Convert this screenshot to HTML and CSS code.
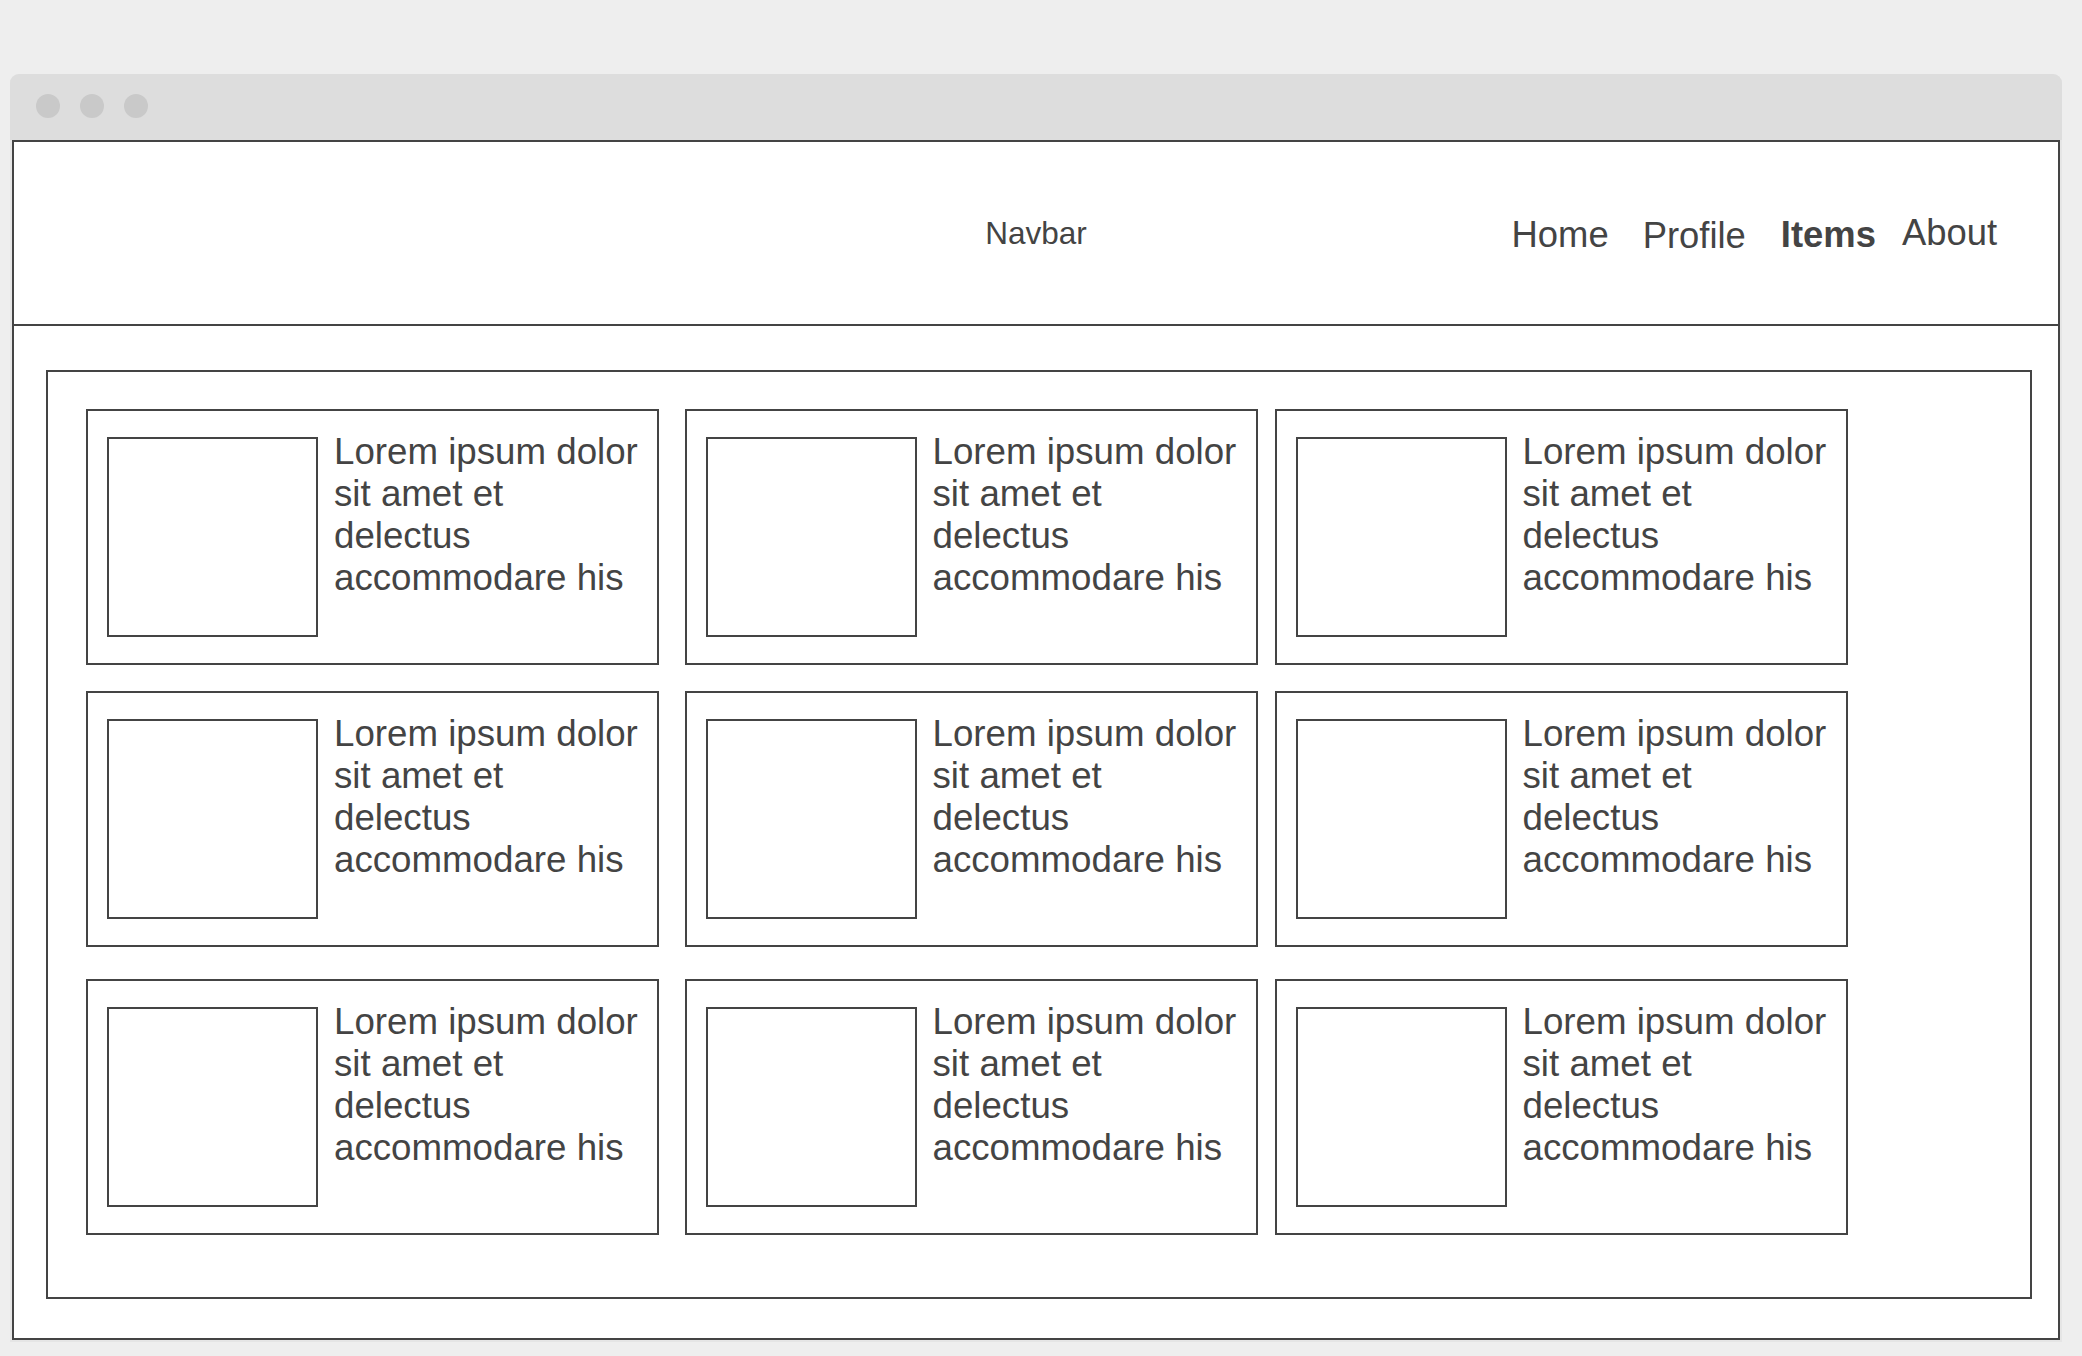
FILE: index.html
```html
<!DOCTYPE html>
<html lang="en">
<head>
<meta charset="utf-8">
<title>Items</title>
<link rel="stylesheet" href="styles.css">
</head>
<body>
<div class="window">
  <div class="titlebar">
    <span class="dot"></span>
    <span class="dot"></span>
    <span class="dot"></span>
  </div>
  <div class="panel">
    <header class="navbar">
      <div class="spacer"></div>
      <div class="brand">Navbar</div>
      <nav class="nav-links">
        <a class="nav-link">Home</a>
        <a class="nav-link nav-profile">Profile</a>
        <a class="nav-link nav-active">Items</a>
        <a class="nav-link nav-about">About</a>
      </nav>
    </header>
    <main class="content">
      <section class="board">
        <div class="grid">
          <div class="card"><div class="thumb"></div><p class="card-text">Lorem ipsum dolor sit amet et delectus accommodare his</p></div>
          <div class="card"><div class="thumb"></div><p class="card-text">Lorem ipsum dolor sit amet et delectus accommodare his</p></div>
          <div class="card"><div class="thumb"></div><p class="card-text">Lorem ipsum dolor sit amet et delectus accommodare his</p></div>
          <div class="card"><div class="thumb"></div><p class="card-text">Lorem ipsum dolor sit amet et delectus accommodare his</p></div>
          <div class="card"><div class="thumb"></div><p class="card-text">Lorem ipsum dolor sit amet et delectus accommodare his</p></div>
          <div class="card"><div class="thumb"></div><p class="card-text">Lorem ipsum dolor sit amet et delectus accommodare his</p></div>
          <div class="card"><div class="thumb"></div><p class="card-text">Lorem ipsum dolor sit amet et delectus accommodare his</p></div>
          <div class="card"><div class="thumb"></div><p class="card-text">Lorem ipsum dolor sit amet et delectus accommodare his</p></div>
          <div class="card"><div class="thumb"></div><p class="card-text">Lorem ipsum dolor sit amet et delectus accommodare his</p></div>
        </div>
      </section>
    </main>
  </div>
</div>
</body>
</html>
```

FILE: styles.css
```css
* {
  box-sizing: border-box;
}

html, body {
  margin: 0;
  padding: 0;
}

body {
  background: #eeeeee;
  font-family: "Liberation Sans", Arial, sans-serif;
  color: #444444;
  width: 2082px;
  height: 1356px;
  overflow: hidden;
}

.window {
  margin: 74px 0 0 10px;
  width: 2052px;
  background: #e5e5e5;
  border-radius: 9px 9px 0 0;
  padding: 0 2px 2px 2px;
}

.titlebar {
  height: 66px;
  background: #dddddd;
  border-radius: 9px 9px 0 0;
  margin: 0 -2px;
  display: flex;
  align-items: flex-start;
  gap: 20px;
  padding: 20px 0 0 26px;
}

.dot {
  width: 24px;
  height: 24px;
  border-radius: 50%;
  background: #c9c9c9;
}

.panel {
  background: #ffffff;
  border: 2px solid #444444;
  height: 1200px;
  display: flex;
  flex-direction: column;
}

.navbar {
  height: 184px;
  border-bottom: 2px solid #444444;
  display: grid;
  grid-template-columns: 1fr auto 1fr;
  align-items: center;
  flex: none;
}

.brand {
  font-size: 31.5px;
  line-height: 36px;
  color: #444444;
}

.nav-links {
  justify-self: end;
  display: flex;
  align-items: center;
  gap: 34px;
  padding-right: 61px;
  padding-top: 3px;
  font-size: 36.4px;
  line-height: 42px;
}

.nav-link {
  color: #444444;
  text-decoration: none;
}

.nav-profile {
  margin-top: 3px;
}

.nav-active {
  font-weight: bold;
  margin-left: 1px;
}

.nav-about {
  margin-left: -8px;
  margin-bottom: 4px;
}

.content {
  flex: 1;
  padding: 44px 26px 39px 32px;
  display: flex;
}

.board {
  flex: 1;
  border: 2px solid #444444;
  padding: 37px 0 0 38px;
}

.grid {
  display: grid;
  grid-template-columns: 598.5px 590px 573px;
  grid-template-rows: 282px 288px 256px;
}

.card {
  width: 573px;
  height: 256px;
  border: 2px solid #444444;
  display: flex;
  align-items: flex-start;
  gap: 16px;
  padding: 20px 0 0 19px;
}

.thumb {
  flex: none;
  width: 211px;
  height: 200px;
  margin-top: 6px;
  border: 2px solid #444444;
}

.card-text {
  flex: none;
  width: 308px;
  margin: 0;
  font-size: 36.7px;
  line-height: 42px;
  color: #444444;
}
```
